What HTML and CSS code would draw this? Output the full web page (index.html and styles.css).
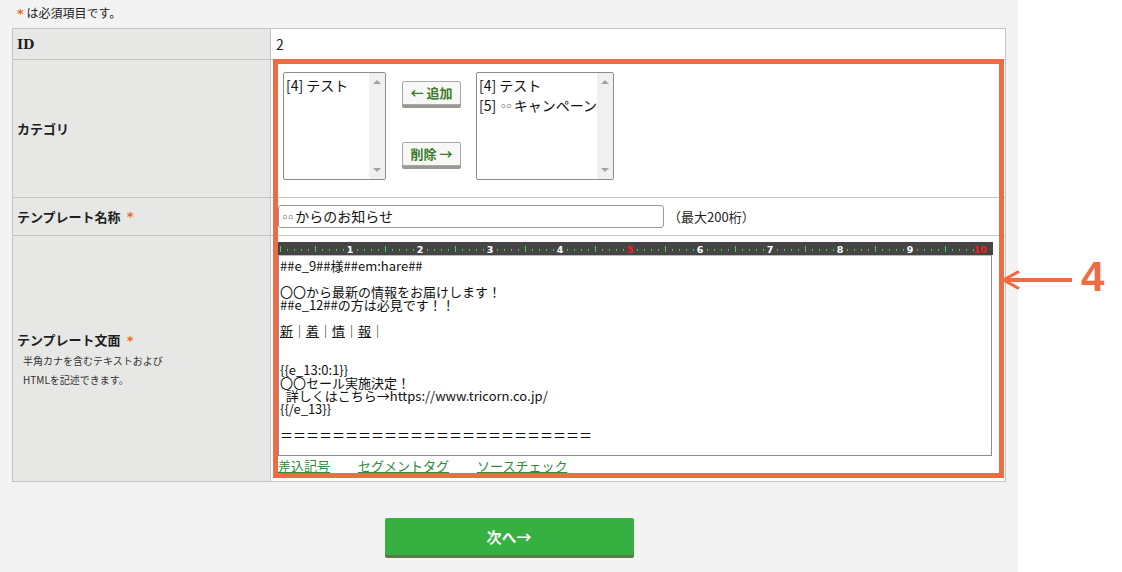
FILE: index.html
```html
<!DOCTYPE html>
<html lang="ja">
<head>
<meta charset="utf-8">
<title>テンプレート編集</title>
<link rel="stylesheet" href="styles.css">
</head>
<body>
<div class="page">
  <p class="note"><span class="req">*</span> は必須項目です。</p>
  <div class="form">
    <div class="lab"><span class="serif">ID</span></div>
    <div class="val val-id">2</div>

    <div class="lab">カテゴリ</div>
    <div class="val val-cat">
      <div class="sel sel-l">
        <div class="opts"><div class="opt">[4] テスト</div></div>
        <div class="sb"><span class="up"></span><span class="dn"></span></div>
      </div>
      <div class="btns">
        <button class="mv">← 追加</button>
        <button class="mv">削除 →</button>
      </div>
      <div class="sel sel-r">
        <div class="opts"><div class="opt">[4] テスト</div><div class="opt">[5] <span class="o">◦◦</span>キャンペーン</div></div>
        <div class="sb"><span class="up"></span><span class="dn"></span></div>
      </div>
    </div>

    <div class="lab"><span>テンプレート名称</span><span class="req lreq">*</span></div>
    <div class="val val-name">
      <div class="inp"><span class="o">◦◦</span>からのお知らせ</div>
      <span class="hint">（最大200桁）</span>
    </div>

    <div class="lab lab-body">
      <div class="lt">テンプレート文面<span class="req lreq">*</span></div>
      <div class="help">半角カナを含むテキストおよび</div>
      <div class="help">HTMLを記述できます。</div>
    </div>
    <div class="val val-body">
      <svg class="ruler" width="715" height="13" viewBox="0 0 715 13">
        <defs>
          <pattern id="tk" patternUnits="userSpaceOnUse" x="2" y="0" width="70" height="13">
            <rect x="7" y="7" width="1" height="2" fill="#3fd13f"/>
            <rect x="14" y="7" width="1" height="2" fill="#3fd13f"/>
            <rect x="21" y="7" width="1" height="2" fill="#3fd13f"/>
            <rect x="28" y="7" width="1" height="2" fill="#3fd13f"/>
            <rect x="35" y="4" width="1" height="6" fill="#3fd13f"/>
            <rect x="42" y="7" width="1" height="2" fill="#3fd13f"/>
            <rect x="49" y="7" width="1" height="2" fill="#3fd13f"/>
            <rect x="56" y="7" width="1" height="2" fill="#3fd13f"/>
            <rect x="63" y="7" width="1" height="2" fill="#3fd13f"/>
          </pattern>
        </defs>
        <rect x="0" y="0" width="715" height="13" fill="#454545"/>
        <rect x="2" y="0" width="706" height="13" fill="url(#tk)"/>
        <rect x="2" y="4" width="1" height="6" fill="#3fd13f"/>
        <g class="rn">
          <text x="72" y="10.5">1</text>
          <text x="142" y="10.5">2</text>
          <text x="212" y="10.5">3</text>
          <text x="282" y="10.5">4</text>
          <text x="352" y="10.5" class="red">5</text>
          <text x="422" y="10.5">6</text>
          <text x="492" y="10.5">7</text>
          <text x="562" y="10.5">8</text>
          <text x="632" y="10.5">9</text>
          <text x="702" y="10.5" class="red">10</text>
        </g>
      </svg>
      <div class="editor">##e_9##様##em:hare##

〇〇から最新の情報をお届けします！
##e_12##の方は必見です！！

<u>新</u>｜<u>着</u>｜<u>情</u>｜<u>報</u>｜


{{e_13:0:1}}
〇〇セール実施決定！
  詳しくはこちら→https://www.tricorn.co.jp/
{{/e_13}}

＝＝＝＝＝＝＝＝＝＝＝＝＝＝＝＝＝＝＝＝＝＝＝＝</div>
      <div class="links">
        <a href="#">差込記号</a>
        <a href="#">セグメントタグ</a>
        <a href="#">ソースチェック</a>
      </div>
    </div>
  </div>
  <div class="actions"><button class="next">次へ→</button></div>

  <div class="highlight"></div>
  <svg class="arrow" width="80" height="30" viewBox="0 0 80 30">
    <line x1="4" y1="15" x2="73" y2="15" stroke="#ef6b43" stroke-width="4"/>
    <polyline points="20,6.5 4.5,15 20,23.5" fill="none" stroke="#ef6b43" stroke-width="3"/>
  </svg>
  <div class="num">4</div>
</div>
</body>
</html>
```
FILE: styles.css
```css
html, body {
  margin: 0;
  padding: 0;
  background: #ffffff;
}
body {
  font-family: "Noto Sans CJK JP", "Noto Sans", sans-serif;
  color: #222;
}
.page {
  position: relative;
  width: 1018px;
  min-height: 572px;
  box-sizing: border-box;
  background: #f3f3f3;
  padding: 0 12px;
}
.note {
  margin: 0;
  height: 28px;
  line-height: 26px;
  font-size: 12px;
  padding-left: 5px;
  color: #222;
}
.req {
  color: #f0641e;
  font-family: "DejaVu Sans", sans-serif;
  font-weight: bold;
  font-size: 13px;
}
.lreq {
  margin-left: 6px;
}
.form {
  width: 994px;
  box-sizing: border-box;
  display: grid;
  grid-template-columns: 258px 735px;
  grid-template-rows: 31px 138px 38px 246px;
  border-top: 1px solid #c4c4c4;
  border-left: 1px solid #c4c4c4;
}
.lab, .val {
  box-sizing: border-box;
  border-right: 1px solid #c4c4c4;
  border-bottom: 1px solid #c4c4c4;
}
.lab {
  background: #e7e8e6;
  font-size: 13px;
  font-weight: bold;
  padding-left: 4px;
  display: flex;
  align-items: center;
  color: #1e1e1e;
}
.serif {
  font-family: "DejaVu Serif", serif;
  font-size: 13px;
}
.val {
  background: #fff;
  font-size: 13px;
}
.val-id {
  display: flex;
  align-items: center;
  padding-left: 5px;
  font-size: 14px;
}
.lab-body {
  flex-direction: column;
  align-items: flex-start;
  justify-content: center;
}
.lt {
  line-height: 20px;
  padding-top: 2px;
}
.help {
  font-size: 10px;
  font-weight: normal;
  line-height: 19px;
  padding-left: 6px;
  color: #333;
}
.val-cat {
  display: flex;
  align-items: flex-start;
  padding: 12px 0 0 12px;
}
.sel {
  box-sizing: border-box;
  height: 108px;
  border: 1px solid #8c8c8c;
  border-radius: 2px;
  background: #fff;
  display: flex;
}
.sel-l { width: 103px; }
.sel-r { width: 138px; }
.opts {
  flex: 1;
  padding: 2px 2px;
  font-size: 14px;
  line-height: 20px;
  color: #111;
  white-space: nowrap;
  overflow: hidden;
}
.o {
  font-family: "DejaVu Sans", sans-serif;
  font-size: 13px;
  letter-spacing: -2px;
  margin-right: 3px;
  color: #333;
}
.sb {
  width: 16px;
  background: #f0f0f0;
  position: relative;
}
.sb .up, .sb .dn {
  position: absolute;
  left: 4px;
  width: 0;
  height: 0;
  border-left: 4px solid transparent;
  border-right: 4px solid transparent;
}
.sb .up {
  top: 7px;
  border-bottom: 4px solid #a3a3a3;
}
.sb .dn {
  bottom: 7px;
  border-top: 4px solid #a3a3a3;
}
.btns {
  display: flex;
  flex-direction: column;
  gap: 37px;
  margin: 9px 15px 0 16px;
}
.mv {
  width: 59px;
  height: 24px;
  padding: 0;
  box-sizing: border-box;
  background: #f7f7f5;
  border: 1px solid #a8a8a8;
  border-radius: 2px;
  box-shadow: 0 3px 0 #979a90;
  font-family: "Noto Sans CJK JP", sans-serif;
  font-size: 13px;
  font-weight: bold;
  color: #3b7a2b;
  line-height: 20px;
}
.val-name {
  display: flex;
  align-items: center;
  padding-left: 7px;
  padding-bottom: 1px;
}
.inp {
  box-sizing: border-box;
  width: 386px;
  height: 23px;
  border: 1px solid #999;
  border-radius: 3px;
  padding-left: 2px;
  font-size: 14px;
  line-height: 21px;
  color: #111;
}
.hint {
  margin-left: 4px;
  font-size: 13px;
  color: #222;
}
.val-body {
  padding: 6px 0 0 7px;
}
.ruler {
  display: block;
}
.rn text {
  font-family: "DejaVu Sans", sans-serif;
  font-weight: bold;
  font-size: 9.5px;
  fill: #ffffff;
  text-anchor: middle;
}
.rn text.red {
  fill: #ff1a1a;
}
.editor {
  box-sizing: border-box;
  width: 714px;
  height: 201px;
  border: 1px solid #8c8c8c;
  border-top-color: #bbb;
  background: #fff;
  padding: 3px 1px;
  white-space: pre;
  font-size: 13px;
  line-height: 13px;
  color: #111;
  overflow: hidden;
}
.editor u {
  text-decoration-thickness: 1px;
  text-underline-offset: 1px;
}
.links {
  display: flex;
  gap: 28px;
  line-height: 18px;
  margin-top: 1px;
  font-size: 13px;
}
.links a {
  color: #2f8a3a;
  text-decoration: underline;
}
.actions {
  display: flex;
  justify-content: center;
  padding-top: 36px;
}
.next {
  width: 249px;
  height: 37px;
  border: none;
  border-radius: 2px;
  background: #36b041;
  box-shadow: 0 3px 0 #5b7a46;
  color: #fff;
  font-family: "Noto Sans CJK JP", sans-serif;
  font-weight: bold;
  font-size: 15px;
}
.highlight {
  position: absolute;
  left: 273px;
  top: 59px;
  width: 731px;
  height: 419px;
  box-sizing: border-box;
  border: 5px solid #ef6b43;
  pointer-events: none;
}
.arrow {
  position: absolute;
  left: 999px;
  top: 265px;
}
.num {
  position: absolute;
  left: 1081px;
  top: 253px;
  font-family: "Liberation Sans", sans-serif;
  font-weight: bold;
  font-size: 42px;
  line-height: 48px;
  color: #ef6b43;
}
```
